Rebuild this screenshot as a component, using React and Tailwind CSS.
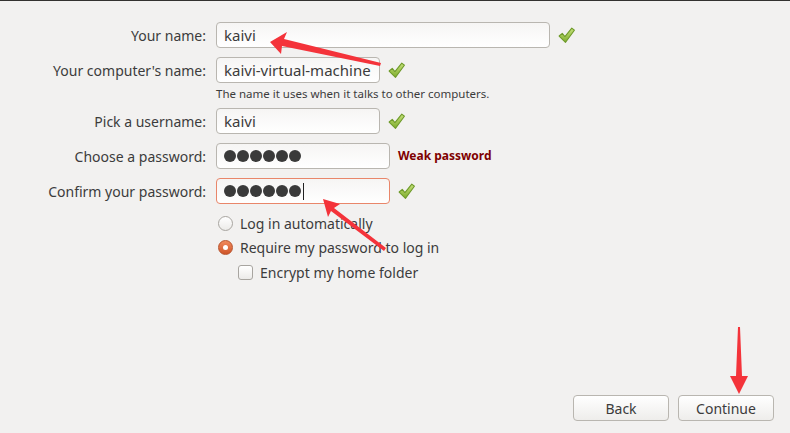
import React from 'react';

const Check = () => (
  <svg width="19" height="19" viewBox="0 0 18 18" className="shrink-0">
    <defs>
      <linearGradient id="ck" x1="0" y1="0" x2="0" y2="1">
        <stop offset="0" stopColor="#c6e07a" />
        <stop offset="1" stopColor="#7fae2e" />
      </linearGradient>
    </defs>
    <path
      d="M2 9.5 L5 7 L7.5 10 L14 2 L16.5 4 L8 15.5 Z"
      fill="url(#ck)"
      stroke="#6e9a2a"
      strokeWidth="1"
      strokeLinejoin="round"
    />
  </svg>
);

const Field = ({ label, width, children, focus, after }) => (
  <div className="flex items-center">
    <div className="w-[207px] text-right pr-[1px] text-[14px] text-[#3c3c3c]">{label}</div>
    <div
      className={`ml-[9px] h-[26px] flex items-center pl-[7px] rounded-[4px] border bg-gradient-to-b from-[#f6f5f4] to-white text-[15px] text-[#3c3c3c] ${
        focus ? 'border-[#e9866a]' : 'border-[#b9b6b0]'
      }`}
      style={{ width }}
    >
      {children}
    </div>
    {after}
  </div>
);

const Dots = ({ caret }) => (
  <span className="flex items-center">
    {[0, 1, 2, 3, 4, 5].map((i) => (
      <span key={i} className="w-[12px] h-[12px] rounded-full bg-[#3a3a3a] mr-[1px]" />
    ))}
    {caret && <span className="ml-[1px] w-[1px] h-[17px] bg-[#222]" />}
  </span>
);

export default function App() {
  return (
    <div
      className="relative w-[790px] h-[433px] bg-[#f2f1f0] border-t border-[#333230] overflow-hidden"
      style={{ fontFamily: '"Noto Sans", "Open Sans", sans-serif' }}
    >
      <div className="flex flex-col pt-[21px]">
        <Field label="Your name:" width={334} after={<span className="ml-[7px]"><Check /></span>}>
          kaivi
        </Field>
        <div className="mt-[9px]">
          <Field label="Your computer's name:" width={164} after={<span className="ml-[7px]"><Check /></span>}>
            kaivi-virtual-machine
          </Field>
        </div>
        <div className="ml-[216px] mt-[3px] text-[11.5px] text-[#3c3c3c] leading-[16px]">
          The name it uses when it talks to other computers.
        </div>
        <div className="mt-[6px]">
          <Field label="Pick a username:" width={164} after={<span className="ml-[7px]"><Check /></span>}>
            kaivi
          </Field>
        </div>
        <div className="mt-[9px]">
          <Field
            label="Choose a password:"
            width={174}
            after={<span className="ml-[8px] text-[12px] font-bold text-[#7f0000]">Weak password</span>}
          >
            <Dots />
          </Field>
        </div>
        <div className="mt-[9px]">
          <Field label="Confirm your password:" width={174} focus after={<span className="ml-[7px]"><Check /></span>}>
            <Dots caret />
          </Field>
        </div>

        <div className="ml-[218px] mt-[7px] flex flex-col text-[14px] text-[#3c3c3c]">
          <div className="flex items-center h-[24px]">
            <span className="w-[15px] h-[15px] rounded-full border border-[#a8a5a0] bg-gradient-to-b from-white to-[#ecebe9]" />
            <span className="ml-[7px]">Log in automatically</span>
          </div>
          <div className="flex items-center h-[24px]">
            <span className="w-[15px] h-[15px] rounded-full border border-[#b8532c] bg-gradient-to-b from-[#f08a5d] to-[#cf5426] flex items-center justify-center">
              <span className="w-[5px] h-[5px] rounded-full bg-white" />
            </span>
            <span className="ml-[7px]">Require my password to log in</span>
          </div>
          <div className="flex items-center h-[26px] ml-[20px]">
            <span className="w-[15px] h-[15px] rounded-[3px] border border-[#a8a5a0] bg-gradient-to-b from-white to-[#ecebe9]" />
            <span className="ml-[7px]">Encrypt my home folder</span>
          </div>
        </div>
      </div>

      <div className="absolute right-[16px] bottom-[12px] flex gap-[9px]">
        {['Back', 'Continue'].map((t) => (
          <button
            key={t}
            className="w-[96px] h-[26px] rounded-[4px] border border-[#b9b6b0] bg-gradient-to-b from-white to-[#eeedeb] text-[14px] text-[#3c3c3c]"
          >
            {t}
          </button>
        ))}
      </div>

      <svg className="absolute inset-0 pointer-events-none" width="790" height="433">
        <g fill="#f4333a">
          <polygon points="270,41 287,31 284,38 381,62 380,65 282,45 281,53" />
          <polygon points="323,198 340,203 334,207 386,247 384,250 331,210 328,216" />
          <polygon points="738,326 740,326 742,375 748,375 739,393 730,375 736,375" />
        </g>
      </svg>
    </div>
  );
}
